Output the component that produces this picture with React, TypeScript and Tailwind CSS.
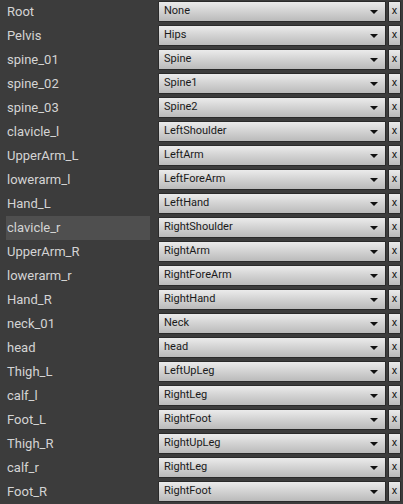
import { useState } from "react";

const ROWS: [string, string][] = [
  ["Root", "None"],
  ["Pelvis", "Hips"],
  ["spine_01", "Spine"],
  ["spine_02", "Spine1"],
  ["spine_03", "Spine2"],
  ["clavicle_l", "LeftShoulder"],
  ["UpperArm_L", "LeftArm"],
  ["lowerarm_l", "LeftForeArm"],
  ["Hand_L", "LeftHand"],
  ["clavicle_r", "RightShoulder"],
  ["UpperArm_R", "RightArm"],
  ["lowerarm_r", "RightForeArm"],
  ["Hand_R", "RightHand"],
  ["neck_01", "Neck"],
  ["head", "head"],
  ["Thigh_L", "LeftUpLeg"],
  ["calf_l", "RightLeg"],
  ["Foot_L", "RightFoot"],
  ["Thigh_R", "RightUpLeg"],
  ["calf_r", "RightLeg"],
  ["Foot_R", "RightFoot"],
];

function BoneRow({ bone, target, hovered }: { bone: string; target: string; hovered: boolean }) {
  return (
    <div className="flex h-[24px] items-stretch">
      <div className="w-[158px] pl-[6px] pr-[8px] flex">
        <div
          className={`flex-1 flex items-center pl-[1px] text-[13px] text-[#d4d4d4] ${
            hovered ? "bg-[#4f4f4f]" : ""
          }`}
        >
          {bone}
        </div>
      </div>
      <div className="flex py-[1px] pb-[2px] gap-[2px] w-[243px]">
        <div className="flex-1 flex items-center justify-between pl-[5px] pr-[7px] border border-[#2a2a2a] rounded-[1px] bg-gradient-to-b from-[#ebebeb] to-[#bababa]">
          <span className="text-[11px] text-[#1a1a1a]">{target}</span>
          <span className="w-0 h-0 border-l-[4px] border-r-[4px] border-t-[4px] border-l-transparent border-r-transparent border-t-[#111]" />
        </div>
        <div className="w-[13px] flex items-center justify-center border border-[#2a2a2a] rounded-[1px] bg-gradient-to-b from-[#ebebeb] to-[#bababa] text-[11px] text-[#1a1a1a]">
          x
        </div>
      </div>
    </div>
  );
}

export default function App() {
  const [hover] = useState("clavicle_r");
  return (
    <div
      className="w-[403px] h-[504px] bg-[#3c3c3c] overflow-hidden"
      style={{ fontFamily: "Roboto, 'Liberation Sans', sans-serif" }}
    >
      {ROWS.map(([b, t]) => (
        <BoneRow key={b} bone={b} target={t} hovered={b === hover} />
      ))}
    </div>
  );
}
